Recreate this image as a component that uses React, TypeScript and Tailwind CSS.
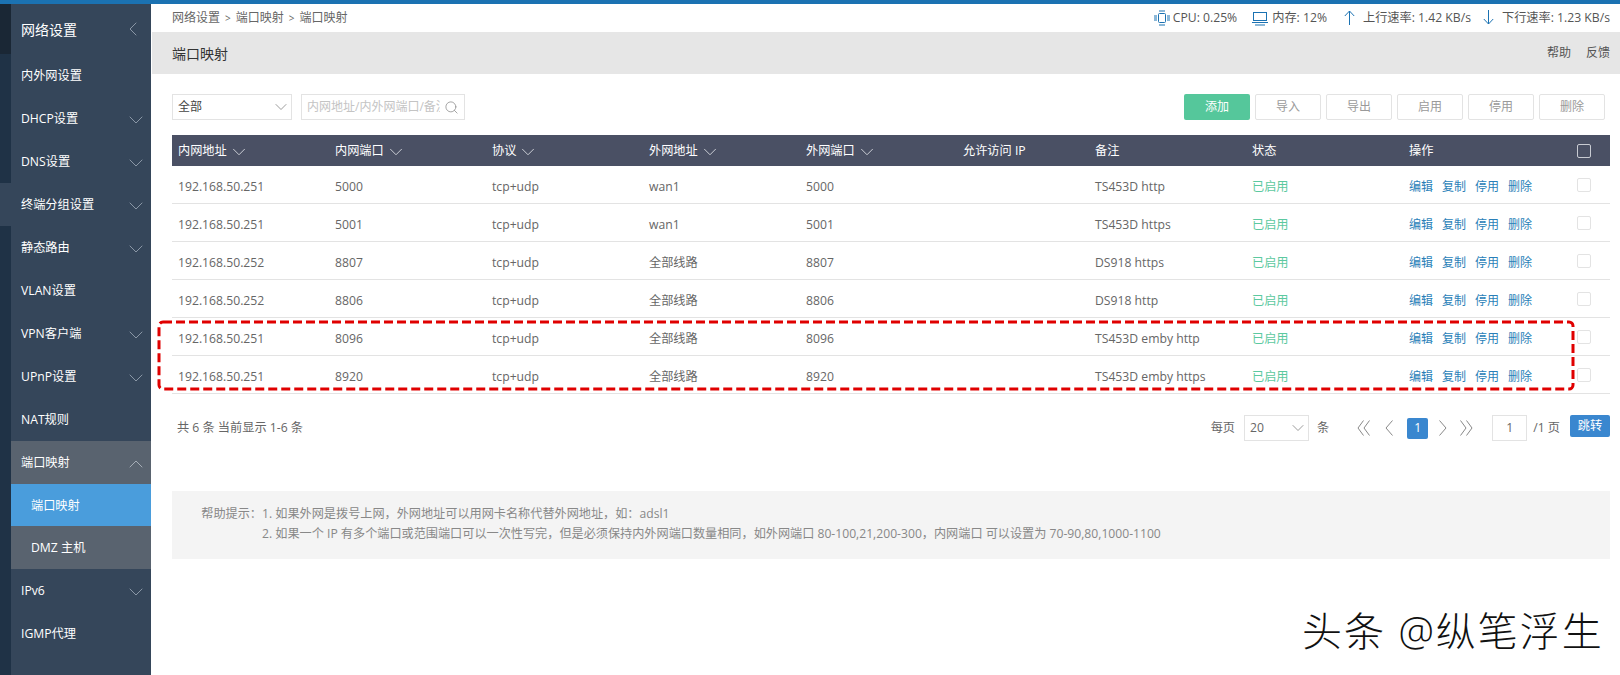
import React from 'react';
import { ChevronDown, ChevronLeft, ChevronUp, Search } from 'lucide-react';

const font = { fontFamily: '"Open Sans", "Noto Sans CJK SC", sans-serif' };

const menu = [
  { label: '内外网设置' },
  { label: 'DHCP设置', arrow: true },
  { label: 'DNS设置', arrow: true },
  { label: '终端分组设置', arrow: true },
  { label: '静态路由', arrow: true },
  { label: 'VLAN设置' },
  { label: 'VPN客户端', arrow: true },
  { label: 'UPnP设置', arrow: true },
  { label: 'NAT规则' },
];

const rows = [
  ['192.168.50.251', '5000', 'wan1', '5000', 'TS453D http'],
  ['192.168.50.251', '5001', 'wan1', '5001', 'TS453D https'],
  ['192.168.50.252', '8807', '全部线路', '8807', 'DS918 https'],
  ['192.168.50.252', '8806', '全部线路', '8806', 'DS918 http'],
  ['192.168.50.251', '8096', '全部线路', '8096', 'TS453D emby http'],
  ['192.168.50.251', '8920', '全部线路', '8920', 'TS453D emby https'],
];

const cols = 'grid grid-cols-[157px_157px_157px_157px_157px_132px_157px_157px_174px_1fr] items-center';

const MenuItem = ({ label, arrow }: { label: string; arrow?: boolean }) => (
  <div className="h-[43px] pt-[2px] pl-[10px] pr-[3px] flex items-center justify-between text-[12.2px] text-white">
    <span>{label}</span>
    {arrow && <ChevronDown className="h-6 w-6 text-[#8a97a6]" strokeWidth={1} />}
  </div>
);

const Head = ({ label }: { label: string }) => (
  <div className="px-[6px] flex items-center">
    {label}
    <ChevronDown className="h-[22px] w-[22px] ml-[1px] text-[#d5d8de]" strokeWidth={1} />
  </div>
);

const Btn = ({ label }: { label: string }) => (
  <button className="w-[66px] h-[26px] rounded-[2px] border border-[#e3e3e3] text-[12px] text-[#9a9a9a]">{label}</button>
);

// pager arrows, taller than the lucide ones
const Pager = ({ d, w }: { d: string; w: number }) => (
  <svg width={w} height="16" viewBox={`0 0 ${w} 16`} fill="none" stroke="#888" strokeWidth="1">
    <path d={d} />
  </svg>
);

const App = () => {
  return (
    <div className="w-[1620px] h-[675px] relative overflow-hidden bg-white flex flex-col" style={font}>
      <div className="h-[4px] bg-[#1b72b2]" />
      <div className="flex flex-1 min-h-0">
        <div className="w-[11px] bg-[#1f3246] flex flex-col">
          <div className="h-[50px] bg-[#1a2735]" />
          <div className="h-[129px]" />
          <div className="h-[43px] bg-[#35465a]" />
        </div>
        <div className="w-[140px] bg-[#35465a] flex flex-col">
          <div className="h-[50px] pl-[10px] pr-[6px] flex items-center justify-between text-[14px] text-white">
            <span>网络设置</span>
            <ChevronLeft className="h-6 w-6 text-[#8a97a6]" strokeWidth={1} />
          </div>
          {menu.map((m) => (
            <MenuItem key={m.label} label={m.label} arrow={m.arrow} />
          ))}
          <div className="bg-[#59636f]">
            <div className="h-[43px] pt-[2px] pl-[10px] pr-[3px] flex items-center justify-between text-[12.2px] text-white">
              <span>端口映射</span>
              <ChevronUp className="h-6 w-6 text-[#a5adb6]" strokeWidth={1} />
            </div>
            <div className="h-[42px] pt-[2px] pl-[20px] flex items-center text-[12.2px] text-white bg-[#4a9ddc]">端口映射</div>
            <div className="h-[43px] pt-[2px] pl-[20px] flex items-center text-[12.2px] text-white">DMZ 主机</div>
          </div>
          <MenuItem label="IPv6" arrow />
          <MenuItem label="IGMP代理" />
        </div>

        <div className="flex-1 min-w-0 pl-[1px] flex flex-col">
          <div className="h-[28px] pl-[20px] pr-[10px] flex items-center justify-between text-[12.2px] text-[#666]">
            <div className="flex items-center gap-[5px] text-[12px]">
              <span>网络设置</span>
              <span className="text-[10px]">&gt;</span>
              <span>端口映射</span>
              <span className="text-[10px]">&gt;</span>
              <span>端口映射</span>
            </div>
            <div className="flex items-center text-[#555]">
              <svg className="h-4 w-[18px] text-[#1b72b2] mr-[2px]" viewBox="0 0 18 16" fill="none" stroke="currentColor" strokeWidth="1">
                <rect x="5.5" y="3.5" width="7" height="9" rx="1" />
                <path d="M1 6h3M1 8h3M1 10h3M14 6h3M14 8h3M14 10h3M7 0v2M9 0v2M11 0v2M7 14v2M9 14v2M11 14v2" />
              </svg>
              <span>CPU: 0.25%</span>
              <svg className="h-4 w-[18px] text-[#1b72b2] ml-[14px] mr-[3px]" viewBox="0 0 18 16" fill="none" stroke="currentColor" strokeWidth="1">
                <rect x="2.5" y="2.5" width="13" height="8" />
                <path d="M1 12.5h16M5 14v2M7 14v2M9 14v2M11 14v2M13 14v2" />
              </svg>
              <span>内存: 12%</span>
              <svg className="ml-[17px] mr-[8px] text-[#1b72b2]" width="11" height="15" viewBox="0 0 11 15" fill="none" stroke="currentColor" strokeWidth="1">
                <path d="M5.5 1V15M0.8 6L5.5 1L10.2 6" />
              </svg>
              <span>上行速率: 1.42 KB/s</span>
              <svg className="ml-[12px] mr-[8px] text-[#1b72b2]" width="11" height="15" viewBox="0 0 11 15" fill="none" stroke="currentColor" strokeWidth="1">
                <path d="M5.5 0V14M0.8 9L5.5 14L10.2 9" />
              </svg>
              <span>下行速率: 1.23 KB/s</span>
            </div>
          </div>

          <div className="h-[42px] pl-[20px] pr-[10px] bg-[#e6e6e6] flex items-center justify-between">
            <span className="text-[14px] text-[#333]">端口映射</span>
            <div className="flex gap-[15px] text-[12px] text-[#555]">
              <span>帮助</span>
              <span>反馈</span>
            </div>
          </div>

          <div className="pl-[20px] pr-[10px]">
            <div className="mt-[20px] flex items-center justify-between">
              <div className="flex items-center gap-[9px]">
                <div className="w-[120px] h-[26px] border border-[#e3e3e3] pl-[5px] flex items-center justify-between text-[12px] text-[#444]">
                  <span>全部</span>
                  <ChevronDown className="h-5 w-5 text-[#888]" strokeWidth={1} />
                </div>
                <div className="w-[164px] h-[26px] border border-[#e3e3e3] pl-[5px] pr-[5px] flex items-center justify-between">
                  <input
                    className="w-[133px] bg-transparent outline-none text-[12px] placeholder:text-[#c4c4c4]"
                    placeholder="内网地址/内外网端口/备注"
                  />
                  <Search className="h-[15px] w-[15px] text-[#888]" strokeWidth={1.2} />
                </div>
              </div>
              <div className="flex gap-[5px] pr-[5px]">
                <button className="w-[66px] h-[26px] rounded-[2px] bg-[#55c79b] text-[12px] text-white">添加</button>
                <Btn label="导入" />
                <Btn label="导出" />
                <Btn label="启用" />
                <Btn label="停用" />
                <Btn label="删除" />
              </div>
            </div>

            <div className="mt-[15px] text-[12.2px]">
              <div className={`${cols} h-[31px] pt-[2px] bg-[#4a5064] text-white`}>
                <Head label="内网地址" />
                <Head label="内网端口" />
                <Head label="协议" />
                <Head label="外网地址" />
                <Head label="外网端口" />
                <div className="px-[6px]">允许访问 IP</div>
                <div className="px-[6px]">备注</div>
                <div className="px-[6px]">状态</div>
                <div className="px-[6px]">操作</div>
                <div className="w-[14px] h-[14px] -mt-[2px] border border-[#c8cbd2] rounded-[2px]" />
              </div>
              {rows.map((r, i) => (
                <div key={i} className={`${cols} h-[38px] pt-[5px] border-b border-[#e3e3e3] text-[#666]`}>
                  <div className="px-[6px]">{r[0]}</div>
                  <div className="px-[6px]">{r[1]}</div>
                  <div className="px-[6px]">tcp+udp</div>
                  <div className="px-[6px]">{r[2]}</div>
                  <div className="px-[6px]">{r[3]}</div>
                  <div />
                  <div className="px-[6px]">{r[4]}</div>
                  <div className="px-[6px] text-[#5cc9a0]">已启用</div>
                  <div className="px-[6px] flex gap-[9px] text-[12px] text-[#2a7fb8]">
                    <span>编辑</span>
                    <span>复制</span>
                    <span>停用</span>
                    <span>删除</span>
                  </div>
                  <div className="w-[14px] h-[14px] -mt-[5px] border border-[#e3e3e3] rounded-[2px]" />
                </div>
              ))}
            </div>

            <div className="mt-[21px] flex items-start justify-between text-[12.2px] text-[#666]">
              <span className="pl-[5px] leading-[26px]">共 6 条 当前显示 1-6 条</span>
              <div className="flex items-start">
                <span className="leading-[26px]">每页</span>
                <div className="ml-[9px] w-[65px] h-[26px] border border-[#e3e3e3] pl-[5px] flex items-center justify-between">
                  <span>20</span>
                  <ChevronDown className="h-5 w-5 text-[#888]" strokeWidth={1} />
                </div>
                <span className="ml-[8px] leading-[26px]">条</span>
                <div className="ml-[28px] h-[26px] flex items-center">
                  <Pager w={13} d="M6.5 0.5L1 8L6.5 15.5M12.5 0.5L7 8L12.5 15.5" />
                  <span className="ml-[15px]"><Pager w={8} d="M7.5 0.5L1 8L7.5 15.5" /></span>
                  <span className="ml-[14px] w-[21px] h-[21px] rounded-[2px] bg-[#3a87cf] text-white flex items-center justify-center">1</span>
                  <span className="ml-[11px]"><Pager w={8} d="M0.5 0.5L7 8L0.5 15.5" /></span>
                  <span className="ml-[13px]"><Pager w={13} d="M0.5 0.5L6 8L0.5 15.5M6.5 0.5L12 8L6.5 15.5" /></span>
                </div>
                <div className="ml-[19px] w-[35px] h-[26px] border border-[#e3e3e3] flex items-center justify-center">1</div>
                <span className="ml-[6px] leading-[26px]">/1 页</span>
                <button className="ml-[10px] w-[40px] h-[22px] rounded-[2px] bg-[#3a87cf] text-white">跳转</button>
              </div>
            </div>

            <div className="mt-[50px] h-[68px] pb-[3px] bg-[#f4f4f4] flex flex-col justify-center text-[12.15px] text-[#888] leading-[19px] gap-[1px]">
              <div className="flex">
                <span className="w-[90px] text-right">帮助提示：</span>
                <span>1. 如果外网是拨号上网，外网地址可以用网卡名称代替外网地址，如：adsl1</span>
              </div>
              <div className="pl-[90px]">2. 如果一个 IP 有多个端口或范围端口可以一次性写完，但是必须保持内外网端口数量相同，如外网端口 80-100,21,200-300，内网端口 可以设置为 70-90,80,1000-1100</div>
            </div>
          </div>
        </div>
      </div>

      {/* red marker drawn over the two new rows */}
      <svg className="absolute left-[157px] top-[320px]" width="1418" height="72" fill="none">
        <rect x="2" y="2" width="1414" height="67" rx="4" stroke="#e00000" strokeWidth="3" strokeDasharray="9 4" />
      </svg>
      <div className="absolute left-[1302px] top-[606px] text-[40px] leading-[50px] font-light tracking-[2px] text-[#111] whitespace-nowrap">头条 @纵笔浮生</div>
    </div>
  );
};

export default App;
